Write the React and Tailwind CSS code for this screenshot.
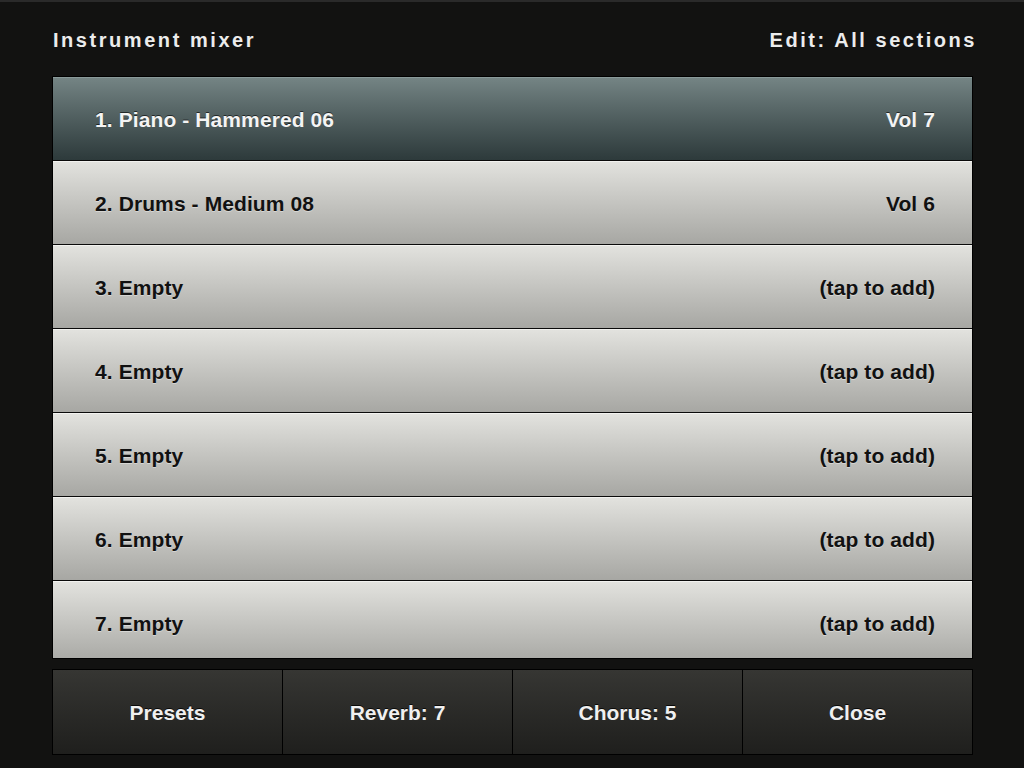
const slots = [
  { name: '1. Piano - Hammered 06', right: 'Vol 7', selected: true },
  { name: '2. Drums - Medium 08', right: 'Vol 6' },
  { name: '3. Empty', right: '(tap to add)' },
  { name: '4. Empty', right: '(tap to add)' },
  { name: '5. Empty', right: '(tap to add)' },
  { name: '6. Empty', right: '(tap to add)' },
  { name: '7. Empty', right: '(tap to add)' },
];

const buttons = ['Presets', 'Reverb: 7', 'Chorus: 5', 'Close'];

function SlotRow({ slot }) {
  const cls = slot.selected
    ? 'bg-gradient-to-b from-[#748484] to-[#2d3a3b] text-[#f4f4f4] [text-shadow:0_-1px_0_rgba(0,0,0,0.6)] border-t border-[#8a9a9a]'
    : 'bg-gradient-to-b from-[#e2e2de] to-[#a7a7a3] text-[#111] [text-shadow:0_1px_0_rgba(255,255,255,0.4)] border-t border-[#f2f2ef]';
  return (
    <div
      className={`flex h-[84px] shrink-0 items-center justify-between border-b border-b-[#0a0a0a] pl-[42px] pr-[37px] pt-[1px] text-[21px] font-bold tracking-[0.1px] ${cls}`}
    >
      <span>{slot.name}</span>
      <span>{slot.right}</span>
    </div>
  );
}

export default function App() {
  return (
    <div
      className="flex h-[768px] w-[1024px] flex-col overflow-hidden border-t-2 border-[#2a2a2a] bg-[#121211]"
      style={{ fontFamily: '"Liberation Sans", Arial, sans-serif' }}
    >
      <div className="flex h-[74px] items-center justify-between pl-[53px] pr-[47px] pt-[2px] text-[20px] font-bold tracking-[2.55px] text-[#ececec]">
        <span>Instrument mixer</span>
        <span>Edit: All sections</span>
      </div>

      <div className="ml-[52px] flex h-[583px] w-[921px] flex-col overflow-hidden border border-black bg-black">
        {slots.map((slot) => (
          <SlotRow key={slot.name} slot={slot} />
        ))}
      </div>

      <div className="ml-[52px] mt-[10px] grid h-[86px] w-[921px] grid-cols-4 gap-px border border-black bg-black">
        {buttons.map((b) => (
          <div
            key={b}
            className="flex items-center justify-center bg-gradient-to-b from-[#363633] to-[#1f1f1d] pt-[1px] text-[21px] font-bold text-[#f0f0f0] [text-shadow:0_-1px_0_rgba(0,0,0,0.8)]"
          >
            {b}
          </div>
        ))}
      </div>
    </div>
  );
}
